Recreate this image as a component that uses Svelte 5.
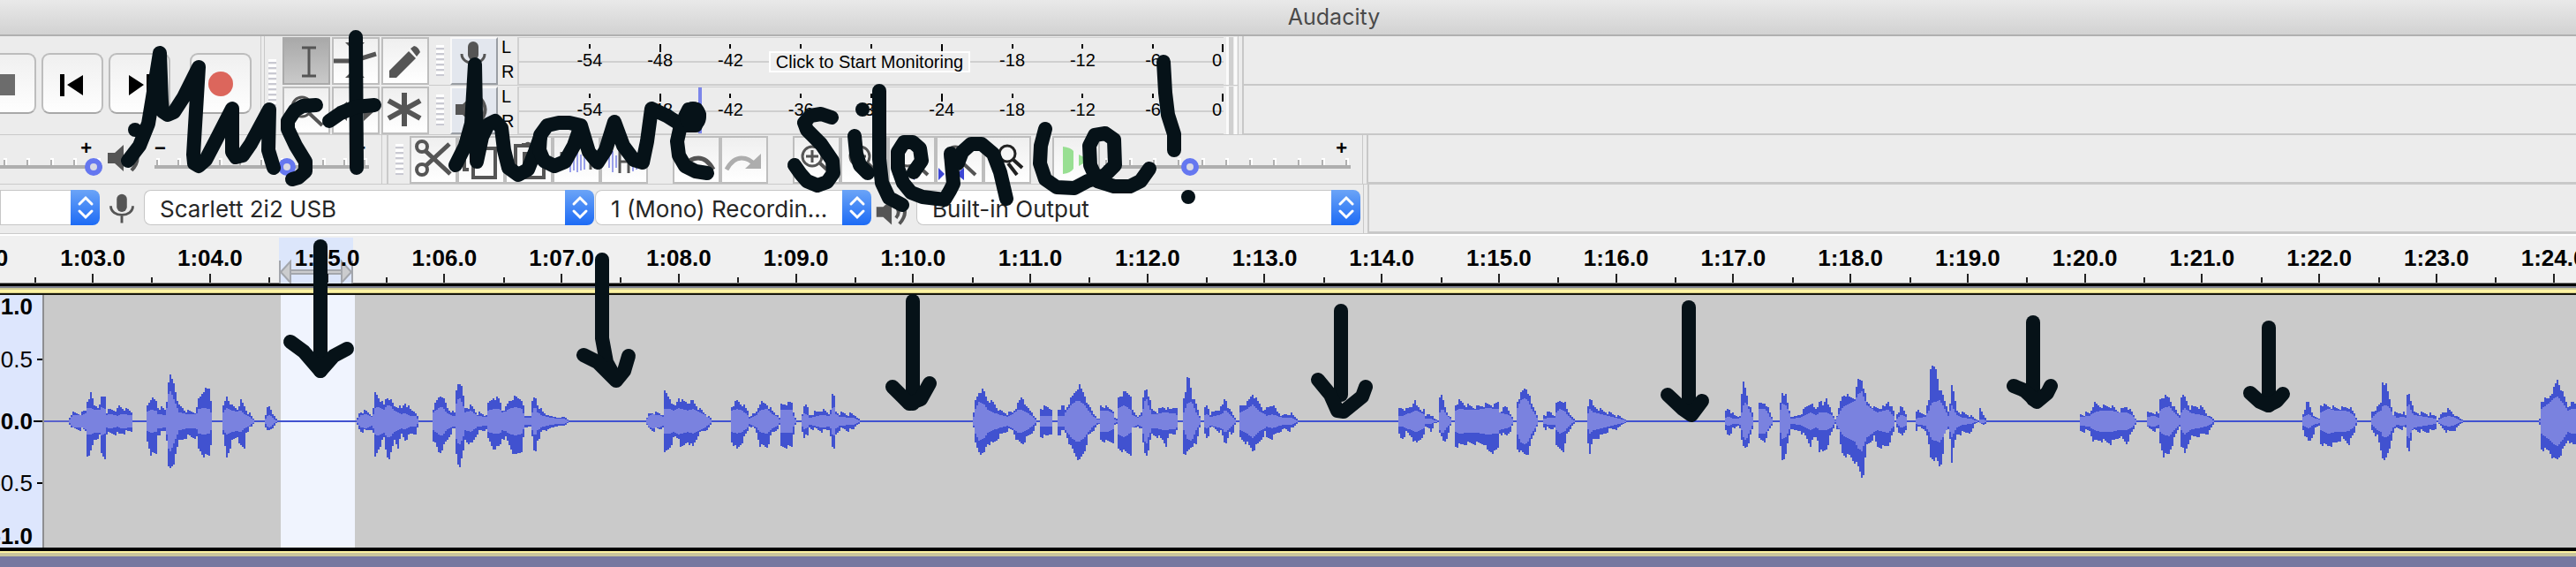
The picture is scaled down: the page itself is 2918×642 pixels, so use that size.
<script lang="ts">
  const meterMarks = [-54, -48, -42, -36, -30, -24, -18, -12, -6];
  const seconds = Array.from({ length: 23 }, (_, i) => 62 + i);

  function clock(t: number) {
    return `${Math.floor(t / 60)}:${String(t % 60).padStart(2, '0')}.0`;
  }

  // [x, peak above, peak below, rms] for each bend of the envelope
  const envelope = [
    [78,3,3,2],[82,8,8,7],[92,8,8,7],[97,12,10,9],[98,22,38,15],[102,30,34,15],[106,17,20,13],[112,16,16,13],[114,26,36,16],[118,28,41,14],[119,10,12,7],[124,12,13,8],[132,12,13,6],[133,17,14,7],[138,14,12,8],[148,10,10,7],[150,0,0,0],
    [164,0,0,0],[165,15,18,10],[170,25,36,13],[176,22,36,12],[178,15,14,8],[186,12,10,7],[188,22,20,15],[189,42,45,30],[192,50,54,34],[196,42,48,25],[199,28,28,18],[202,16,22,10],[212,10,16,8],[220,10,17,8],[221,4,5,3],[223,22,30,14],[230,34,38,15],[237,36,38,14],[239,10,12,6],[240,0,0,0],
    [250,0,0,0],[252,15,16,10],[256,27,40,15],[262,16,22,12],[268,13,16,11],[272,22,28,12],[276,16,30,8],[277,13,12,8],[282,7,7,5],[288,0,0,0],[299,0,0,0],[301,12,12,6],[304,15,10,7],[308,8,6,4],[313,0,0,0],
    [402,0,0,0],[404,3,3,2],[407,10,10,7],[415,10,10,8],[420,7,7,5],[422,12,14,8],[424,31,40,15],[428,26,30,16],[434,17,18,13],[437,27,38,18],[441,24,40,18],[446,16,20,12],[450,16,28,10],[454,13,14,8],[458,20,20,9],[464,12,14,6],[470,10,12,6],[474,0,0,0],
    [489,0,0,0],[490,14,20,10],[497,28,36,16],[500,28,30,16],[506,14,20,9],[511,10,10,6],[514,8,8,6],[516,34,36,20],[519,46,52,28],[523,34,40,20],[526,14,20,10],[533,16,26,12],[540,8,12,6],[550,6,8,5],[552,18,20,12],[558,26,30,14],[565,24,28,14],[568,12,18,10],[572,14,18,11],[576,22,26,14],[582,26,38,16],[590,24,32,14],[594,5,6,4],[601,5,5,4],[602,20,18,10],[605,28,40,18],[608,18,20,10],[614,9,10,6],[622,5,7,4],[632,3,4,3],[638,4,4,3],[644,0,0,0],
    [731,0,0,0],[733,6,6,5],[738,9,9,8],[745,8,8,7],[750,6,6,5],[752,32,36,14],[758,25,28,14],[763,14,17,12],[768,26,18,15],[771,22,30,14],[778,20,22,12],[784,22,28,14],[790,14,14,11],[796,9,10,8],[803,4,5,3],[806,0,0,0],
    [827,0,0,0],[828,16,22,12],[834,22,31,14],[840,18,22,12],[847,10,8,6],[848,4,5,3],[855,8,8,6],[860,20,26,12],[868,18,28,14],[874,10,12,8],[880,6,8,5],[882,3,3,2],[884,18,28,13],[896,20,28,13],[899,5,6,3],[901,0,0,0],[907,0,0,0],[908,8,10,6],[910,18,16,9],[914,14,16,7],[916,6,6,4],[930,12,10,7],[939,8,8,6],[941,20,20,10],[943,35,40,20],[946,10,14,8],[950,8,8,5],[965,7,9,4],[970,3,3,2],[974,0,0,0],
    [1101,0,0,0],[1104,22,24,14],[1108,32,33,22],[1113,34,38,20],[1117,24,24,14],[1124,20,24,10],[1132,10,15,7],[1140,8,9,5],[1146,9,9,8],[1152,18,22,13],[1157,28,25,13],[1162,14,18,10],[1168,10,12,6],[1172,3,4,2],[1173,0,0,0],[1176,0,0,0],[1177,14,16,6],[1184,15,16,6],[1190,14,12,6],[1191,3,3,2],[1192,0,0,0],[1197,0,0,0],[1198,13,14,6],[1204,16,10,6],[1206,12,12,10],[1212,24,28,18],[1218,34,38,23],[1222,39,44,23],[1228,28,32,18],[1232,16,16,12],[1237,10,10,6],[1242,2,3,2],[1245,2,2,2],[1246,17,20,12],[1254,14,22,12],[1261,12,22,8],[1262,3,3,2],[1265,2,2,1],[1266,26,30,15],[1273,32,34,18],[1281,28,36,12],[1282,10,8,7],[1288,4,5,4],[1293,8,10,6],[1294,25,24,14],[1297,39,40,28],[1301,26,26,15],[1304,12,14,8],[1310,10,16,8],[1316,15,20,10],[1320,14,26,10],[1324,12,14,9],[1330,16,12,9],[1333,10,10,6],[1334,0,0,0],
    [1339,0,0,0],[1340,27,34,10],[1343,32,42,18],[1344,48,34,20],[1347,48,30,22],[1349,28,26,22],[1354,18,26,10],[1358,5,6,4],[1360,0,0,0],[1363,0,0,0],[1364,14,14,7],[1367,18,20,8],[1370,6,6,5],[1376,11,8,6],[1383,14,12,8],[1387,27,27,13],[1391,12,12,9],[1395,8,16,5],[1398,3,3,2],[1400,0,0,0],[1403,0,0,0],[1404,16,18,10],[1412,20,24,14],[1418,30,32,19],[1425,20,24,12],[1433,8,10,7],[1434,14,18,6],[1440,18,18,8],[1446,10,12,6],[1452,6,8,4],[1461,8,9,4],[1466,4,4,2],[1470,0,0,0],
    [1583,0,0,0],[1584,13,14,6],[1587,14,20,6],[1592,12,12,8],[1598,16,16,10],[1601,24,22,12],[1604,16,24,12],[1610,12,16,9],[1613,10,16,8],[1614,5,5,3],[1618,8,6,3],[1621,6,10,3],[1624,2,1,1],[1629,0,0,0],[1630,28,10,10],[1633,26,22,14],[1637,11,22,8],[1641,6,6,4],[1644,0,0,0],[1647,0,0,0],[1648,18,27,12],[1652,22,26,14],[1660,17,24,13],[1670,15,24,13],[1680,17,24,14],[1684,18,32,15],[1692,17,34,14],[1697,22,28,14],[1698,10,12,10],[1705,16,16,8],[1711,8,8,6],[1713,0,0,0],
    [1717,0,0,0],[1718,22,30,15],[1722,30,34,24],[1727,38,37,26],[1731,30,34,22],[1734,18,20,14],[1738,12,10,8],[1742,0,0,0],[1747,0,0,0],[1748,6,6,3],[1755,10,8,4],[1761,4,5,4],[1762,18,28,10],[1766,22,30,14],[1771,22,32,12],[1774,12,14,8],[1780,4,4,2],[1784,0,0,0],[1796,0,0,0],[1797,12,18,6],[1800,26,34,14],[1804,16,20,10],[1812,12,16,8],[1822,8,9,6],[1832,6,6,3],[1838,2,2,2],[1841,0,0,0],
    [1953,0,0,0],[1954,10,10,4],[1957,14,16,6],[1962,7,8,3],[1968,4,4,3],[1971,8,6,4],[1972,28,22,10],[1974,43,28,18],[1977,34,30,22],[1980,18,22,14],[1984,8,9,5],[1986,0,0,0],[1991,0,0,0],[1992,18,20,14],[1998,20,22,14],[2000,18,16,12],[2004,8,8,5],[2008,0,0,0],[2014,0,0,0],[2015,14,20,10],[2018,32,42,20],[2022,28,38,18],[2025,14,18,12],[2028,4,8,3],[2038,6,10,4],[2044,14,16,7],[2050,20,26,10],[2055,12,16,7],[2058,16,20,8],[2059,25,32,10],[2064,16,34,10],[2068,26,30,10],[2073,10,14,8],[2078,1,2,1],[2082,12,10,8],[2085,26,34,14],[2089,30,38,18],[2094,26,38,20],[2101,26,46,24],[2103,46,48,30],[2108,46,62,34],[2110,38,58,28],[2114,20,26,18],[2122,14,17,12],[2126,14,28,10],[2134,15,28,12],[2138,22,26,13],[2144,10,12,6],[2146,0,0,0],
    [2148,8,5,3],[2153,16,18,8],[2158,8,8,5],[2160,0,0,0],[2169,0,0,0],[2170,12,8,3],[2174,8,6,4],[2180,8,8,5],[2184,22,26,12],[2186,58,40,18],[2189,66,42,22],[2193,52,42,22],[2196,34,50,24],[2199,36,46,20],[2202,20,10,14],[2206,10,8,6],[2208,20,18,12],[2210,42,44,18],[2213,26,24,12],[2216,11,14,7],[2222,8,12,4],[2232,6,11,3],[2236,2,2,1],[2240,0,0,0],[2242,12,2,2],[2245,7,4,2],[2250,0,0,0],
    [2354,0,0,0],[2356,7,10,5],[2366,8,10,6],[2371,19,22,10],[2378,16,20,12],[2390,16,24,12],[2400,10,16,10],[2408,16,24,10],[2415,8,10,6],[2419,0,0,0],[2431,0,0,0],[2432,8,7,5],[2440,9,9,6],[2445,6,8,4],[2446,24,24,12],[2450,27,38,15],[2456,26,36,17],[2463,12,16,9],[2468,6,5,4],[2470,28,26,10],[2474,26,36,15],[2480,14,18,10],[2486,16,16,8],[2494,14,14,7],[2500,7,12,5],[2508,0,0,0],
    [2606,0,0,0],[2608,8,8,5],[2613,22,22,8],[2617,12,20,6],[2622,4,6,3],[2627,2,3,2],[2628,18,24,10],[2636,16,27,14],[2644,14,24,12],[2652,14,18,12],[2660,15,24,11],[2666,8,12,6],[2669,0,0,0],[2684,0,0,0],[2686,10,9,4],[2692,14,16,10],[2696,20,32,12],[2698,44,40,17],[2702,40,42,18],[2706,24,30,15],[2710,8,10,7],[2714,8,7,4],[2720,9,7,5],[2724,6,6,4],[2725,22,20,12],[2727,35,38,22],[2731,20,12,10],[2733,9,9,7],[2746,8,11,5],[2758,5,8,3],[2760,0,0,0],[2765,8,6,4],[2773,12,12,6],[2780,7,8,4],[2786,2,2,1],[2790,0,0,0],
    [2874,0,0,0],[2877,3,4,2],[2878,22,30,14],[2886,25,32,20],[2892,36,42,26],[2896,46,42,28],[2901,34,34,22],[2908,16,20,12],[2913,20,26,14],[2918,18,24,14]
  ];

  const left = 50;
  const mid = 143;

  // stepped outline, one column every two pixels
  function outline(up: number, down: number, lift: number) {
    let top = '';
    let bottom = '';
    let k = 0;
    for (let x = 78; x < 2918; x += 2) {
      while (k < envelope.length - 2 && envelope[k + 1][0] <= x) k++;
      const a = envelope[k];
      const b = envelope[k + 1];
      const f = (x - a[0]) / (b[0] - a[0]);
      const at = (i: number) => a[i] + (b[i] - a[i]) * f;
      const rough = up === 1 && at(up) > 6 ? ((x * 7) % 5) - 2 : 0;
      const u = Math.round(at(up) + rough + lift);
      const d = Math.round(at(down) - rough + lift);
      top += `H${x - left}V${mid - u}`;
      bottom = `V${mid + d}H${x - left}` + bottom;
    }
    return `M${78 - left} ${mid}${top}H${2918 - left}${bottom}Z`;
  }

  const peaks = outline(1, 2, 1);
  const rms = outline(3, 3, 0);

  const writing = [
    '153,147 153,147',
    '145,182 158,165 168,140 173,110 181,60 183,115 184,126 190,130 197,127 208,110 225,76 219,175 220,185 225,188 233,181 245,158 263,123 263,172 267,178 275,176 284,163 305,124 304,170 310,190',
    '358,119 343,120 334,125 326,137 326,146 335,165 346,183 346,194 338,201 331,203',
    '403,42 404,190',
    '373,137 386,128 403,121 424,119',
    '516,187 527,165 534,140 538,73 540,183 546,155 553,141 561,137 568,145 571,170 576,190 587,198 598,192 606,172 612,155',
    '658,142 645,139 633,139 620,142 612,153 611,170 616,182 628,188 640,183 650,165 658,142 667,172 677,184 686,170 696,138 706,165 718,181 728,184 733,160 738,123 755,131 773,142',
    '773,142 788,142 792,130 789,124 780,124 776,132 785,133 771,142 767,160 769,176 776,188 788,194 801,196',
    '942,133 930,129 918,131 911,139 914,147 930,163 943,182 944,196 937,206 926,210 914,205 907,197 900,187',
    '977,124 977,124',
    '968,154 970,174 974,187 983,196',
    '996,103 996,180 999,207 1007,224 1022,232',
    '1035,195 1044,182 1042,168 1034,161 1024,161 1017,172 1017,190 1023,207 1032,218 1045,223 1070,226 1076,216 1080,208 1077,174 1085,185 1090,172 1100,163 1112,163 1125,174 1133,195 1140,225',
    '1184,146 1179,165 1178,185 1184,203 1197,212 1217,213 1232,205 1252,198 1263,187 1262,158 1252,151 1240,153 1234,165 1235,187 1243,205 1262,211 1280,211 1292,205 1302,191',
    '1318,70 1320,105 1323,130 1330,152 1330,170',
    '1346,223 1346,223'
  ];

  const arrows = [
    '363,279 363,420',
    '329,387 344,398 363,420 378,403 393,395',
    '682,294 682,383 687,410 698,430',
    '661,402 677,410 698,431 707,420 712,403',
    '1034,341 1034,457',
    '1011,438 1030,457 1043,452 1053,434',
    '1519,352 1519,447',
    '1493,430 1507,447 1515,465 1522,466 1543,449 1547,438',
    '1913,348 1913,466',
    '1889,447 1906,463 1916,470 1928,454',
    '2303,365 2303,452',
    '2281,437 2293,442 2307,455 2319,445 2323,437',
    '2570,371 2570,459',
    '2549,445 2560,455 2569,459 2579,454 2586,446'
  ];
</script>

{#snippet chevrons()}
  <svg class="chevrons" viewBox="0 0 33 40" aria-hidden="true"><path d="M10 16l7-7 7 7M10 24l7 7 7-7" /></svg>
{/snippet}

{#snippet mic()}
  <path class="solid" d="M20 11a6 6 0 0 1 12 0v9a6 6 0 0 1-12 0z" />
  <path d="M13 19c0 14 26 14 26 0M26 30v9" stroke-width="3" />
{/snippet}

{#snippet speaker()}
  <path class="solid" d="M6 20h8l10-9v30l-10-9H6z" />
  <path d="M29 19q6 7 0 14M33 12q13 14 0 28" stroke-width="4" />
{/snippet}

{#snippet lens()}
  <circle cx="22" cy="23" r="11" stroke-width="3" />
  <path d="M31 31l14 13" stroke-width="4" />
{/snippet}

{#snippet ticks(count: number)}
  <div class="ticks">
    {#each Array(count) as _}<i></i>{/each}
  </div>
{/snippet}

{#snippet scale(covered: number[])}
  <div class="scale">
    {#each meterMarks as db}
      <span class:long={db % 24 === 0}>{covered.includes(db) ? '' : db}</span>
    {/each}
    <span class="long zero">0</span>
  </div>
{/snippet}

<div class="window">
  <header>Audacity</header>

  <div class="dock">
    <div class="transport">
      <button aria-label="Stop"><svg viewBox="0 0 70 69"><path fill="#6c6c6c" d="M24 24h22v24H24z" /></svg></button>
      <button aria-label="Skip to Start"><svg viewBox="0 0 70 69"><path d="M21 24h5v25h-5zM47 25v23L29 36z" /></svg></button>
      <button aria-label="Skip to End"><svg viewBox="0 0 70 69"><path d="M23 25v23l17-12zM43 24h5v25h-5z" /></svg></button>
      <button class="record" aria-label="Record"><svg viewBox="0 0 70 69"><circle cx="35" cy="35" r="14" fill="#dc665c" /></svg></button>
    </div>

    <div class="grip tall"></div>
    <div class="tools">
      <button class="tool on" aria-label="Selection Tool"><svg viewBox="0 0 54 54"><path d="M22 12h16M30 12v32M22 44h16" stroke-width="3" /></svg></button>
      <button class="tool" aria-label="Envelope Tool"><svg viewBox="0 0 54 54"><path d="M2 27h22l26-8" stroke-width="5" /><path class="solid" d="M15 6h22L26 17zM15 46h22L26 35z" /></svg></button>
      <button class="tool" aria-label="Draw Tool"><svg viewBox="0 0 54 54"><path class="solid" d="M9 46v-8l22-22 8 8-22 22zM33 13l4-3q5 1 7 7l-4 5z" /></svg></button>
      <button class="tool" aria-label="Zoom Tool"><svg viewBox="0 0 54 54">{@render lens()}</svg></button>
      <button class="tool" aria-label="Time Shift Tool"><svg viewBox="0 0 54 54"><path d="M12 28h30" stroke-width="4" /><path class="solid" d="M5 28l12-11v22zM48 28L36 17v22z" /></svg></button>
      <button class="tool" aria-label="Multi-Tool"><svg viewBox="0 0 54 54"><path d="M26 7v38M8 16l36 20M8 36l36-20" stroke-width="6" /></svg></button>
    </div>

    <div class="meters">
      <div class="meter-row">
        <div class="grip"></div>
        <button class="tool meter-button" aria-label="Record Meter"><svg viewBox="0 0 54 54">{@render mic()}</svg></button>
        <div class="channels"><span>L</span><span>R</span></div>
        <div class="meter">
          {@render scale([-36, -30, -24])}
          <button class="hint">Click to Start Monitoring</button>
        </div>
        <div class="clip"></div>
      </div>
      <div class="meter-row">
        <div class="grip"></div>
        <button class="tool meter-button" aria-label="Playback Meter"><svg viewBox="0 0 54 54">{@render speaker()}</svg></button>
        <div class="channels"><span>L</span><span>R</span></div>
        <div class="meter">
          {@render scale([])}
          <div class="peak"></div>
        </div>
        <div class="clip"></div>
      </div>
    </div>
    <div class="spare"><div></div><div></div></div>
  </div>

  <div class="dock bar">
    <div class="mixer">
      <div class="slider recording">
        <div class="signs"><span></span><span>+</span></div>
        {@render ticks(12)}
        <input type="range" min="0" max="100" value="100" aria-label="Recording Volume" />
      </div>
      <svg class="glyph" viewBox="0 0 52 52" aria-hidden="true">{@render speaker()}</svg>
      <div class="slider playback">
        <div class="signs"><span>−</span><span>+</span></div>
        {@render ticks(11)}
        <input type="range" min="0" max="100" value="63" aria-label="Playback Volume" />
      </div>
    </div>
    <div class="grip"></div>
    <div class="group">
      <button class="tool" aria-label="Cut"><svg viewBox="0 0 54 54"><circle cx="14" cy="12" r="6" stroke-width="4" /><circle cx="14" cy="38" r="6" stroke-width="4" /><path d="M18 17l28 26M18 34L45 9" stroke-width="5" /></svg></button>
      <button class="tool" aria-label="Copy"><svg viewBox="0 0 54 54"><path d="M18 14h25v33H18zM13 38H8V6h24v5" stroke-width="4" /></svg></button>
      <button class="tool" aria-label="Paste"><svg viewBox="0 0 54 54"><path d="M22 20h22v27H22zM17 40h-5V11h28v5" stroke-width="4" /><path class="solid" d="M19 13V8h4a4 4 0 0 1 6 0h4v5z" /></svg></button>
      <button class="tool" aria-label="Trim Audio"><svg viewBox="0 0 54 54"><path d="M10 18v20M43 18v20" stroke-width="3" /><path class="blue" d="M16 24v12M20 17v24M24 21v18M28 17v24M32 21v18M36 24v14" /></svg></button>
      <button class="tool" aria-label="Silence Audio"><svg viewBox="0 0 54 54"><path d="M22 16v26M32 16v26M22 29h10" stroke-width="3" /><path class="blue" d="M10 22v14M14 17v24M18 22v14M37 22v18M41 26v12" /></svg></button>
    </div>
    <div class="group">
      <button class="tool" aria-label="Undo"><svg viewBox="0 0 54 54"><path d="M46 38q-7-13-17-13-9 0-15 8" stroke-width="5" /><path class="solid" d="M8 21v16h16z" /></svg></button>
      <button class="tool faded" aria-label="Redo"><svg viewBox="0 0 54 54"><path d="M7 38q7-13 17-13 9 0 15 8" stroke-width="5" /><path class="solid" d="M46 20v17H28z" /></svg></button>
    </div>
    <div class="group zooms">
      <button class="tool" aria-label="Zoom In"><svg viewBox="0 0 54 54">{@render lens()}<path d="M15 23h14M22 16v14" stroke-width="3" /></svg></button>
      <button class="tool" aria-label="Zoom Out"><svg viewBox="0 0 54 54">{@render lens()}<path d="M15 23h14" stroke-width="3" /></svg></button>
      <button class="tool" aria-label="Fit Selection"><svg viewBox="0 0 54 54">{@render lens()}<path class="fit" d="M14 36v14l-9-7zM30 36v14l-9-7z" /></svg></button>
      <button class="tool" aria-label="Fit Project"><svg viewBox="0 0 54 54">{@render lens()}<path class="fit" d="M3 36v14l7-7zM32 36v14l-9-7z" /></svg></button>
      <button class="tool dark" aria-label="Zoom Toggle"><svg viewBox="0 0 54 54"><circle cx="27" cy="20" r="9" stroke-width="3" /><path d="M34 27l10 9M28 31l10 13" stroke-width="4" /></svg></button>
    </div>
    <div class="group play">
      <button class="tool" aria-label="Play-at-Speed"><svg viewBox="0 0 54 54"><path fill="#98df92" stroke="none" d="M12 12q9 1 12 5v20q-3 5-12 6zM30 21l12 6-12 7z" /></svg></button>
    </div>
    <div class="slider speed">
      <div class="signs"><span></span><span>+</span></div>
      {@render ticks(11)}
      <input type="range" min="0" max="100" value="34" aria-label="Playback Speed" />
    </div>
    <div class="spare single"><div></div></div>
  </div>

  <div class="dock bar devices">
    <div class="picker host">
      <select aria-label="Audio Host"><option></option></select>
      {@render chevrons()}
    </div>
    <svg class="glyph" viewBox="0 0 52 52" aria-hidden="true">{@render mic()}</svg>
    <div class="picker input">
      <select aria-label="Recording Device"><option>Scarlett 2i2 USB</option></select>
      {@render chevrons()}
    </div>
    <div class="picker count">
      <select aria-label="Recording Channels"><option>1 (Mono) Recordin...</option></select>
      {@render chevrons()}
    </div>
    <svg class="glyph" viewBox="0 0 52 52" aria-hidden="true">{@render speaker()}</svg>
    <div class="picker output">
      <select aria-label="Playback Device"><option>Built-in Output</option></select>
      {@render chevrons()}
    </div>
    <div class="spare single"><div></div></div>
  </div>

  <div class="timeline">
    <svg class="play-region" viewBox="0 0 84 52" aria-hidden="true">
      <path fill="#dce6fb" d="M0 0h84v52H0z" />
      <path fill="#cbccce" stroke="#a3a6ac" stroke-width="2" d="M1 26v26M83 26v26M13 37h58v4H13zM2 39l11-12v24zM82 39L71 27v24z" />
    </svg>
    <div class="seconds">
      {#each seconds as t}<span>{clock(t)}</span>{/each}
    </div>
  </div>

  <div class="track">
    <div class="levels">
      <b>1.0</b>
      <span>0.5</span>
      <b class="zero-level">0.0</b>
      <span>-0.5</span>
      <b>-1.0</b>
    </div>
    <svg class="wave" aria-label="Audio track" role="img">
      <rect x="268" y="0" width="84" height="286" fill="#f0f4fe" />
      <rect x="0" y="142" width="100%" height="2" fill="#5a62cc" />
      <path d={peaks} fill="#4152d0" />
      <path d={rms} fill="#7a82df" />
    </svg>
  </div>
  <div class="track-edge"></div>

  <svg class="ink" role="img" aria-label="Must have silence!">
    {#each [...writing, ...arrows] as points}
      <polyline {points} />
    {/each}
    <ellipse cx="785" cy="132" rx="7" ry="9" />
  </svg>
</div>

<style>
  :global(body) {
    margin: 0;
    background: #7678a0;
  }
  .window {
    position: relative;
    overflow: hidden;
    padding-bottom: 12px;
    background: linear-gradient(#ececec, #ececec) 0 0 / 100% 630px no-repeat, #7678a0;
    font-family: "Liberation Sans", Arial, sans-serif;
    color: #000;
  }
  .window * {
    box-sizing: border-box;
  }
  header {
    height: 41px;
    padding-left: 104px;
    border-bottom: 2px solid #b0b0b0;
    background: linear-gradient(#e9e9e9, #d2d2d2);
    color: #4a4a4a;
    font: 25px/38px Inter, sans-serif;
    text-align: center;
  }
  button {
    padding: 0;
    border: 0;
    font: inherit;
  }
  button svg {
    display: block;
    width: 100%;
    height: 100%;
  }
  .dock {
    display: flex;
    height: 112px;
    border-bottom: 1px solid #cacaca;
  }
  .bar {
    height: 56px;
  }
  .transport {
    display: flex;
    flex: none;
    gap: 6px;
    width: 300px;
    padding-top: 19px;
    border-right: 1px solid #c8c8c8;
    box-shadow: inset -3px 0 #ececec, inset -4px 0 #c8c8c8;
  }
  .transport button {
    flex: none;
    width: 70px;
    height: 69px;
    border: 2px solid #bdbdbd;
    border-bottom-color: #a8a8a8;
    border-radius: 9px;
    background: linear-gradient(#f0f0f0, #fefefe);
  }
  .transport button svg {
    margin: -2px;
    width: 70px;
    height: 69px;
  }
  .transport button:first-child {
    margin-left: -29px;
  }
  .transport .record {
    margin-left: 16px;
  }
  .grip {
    flex: none;
    align-self: center;
    width: 9px;
    height: 36px;
    margin: 0 7px 0 8px;
    background: repeating-linear-gradient(#fff 0 3px, #c9c9d2 3px 5px, #ececec 5px 6px);
  }
  .grip.tall {
    height: 60px;
    margin: 0 7px 0 4px;
  }
  .tools {
    display: grid;
    flex: none;
    grid-template-columns: repeat(3, 54px);
    gap: 2px;
    padding-top: 1px;
    align-content: start;
  }
  .tool {
    flex: none;
    width: 54px;
    height: 54px;
    border: 2px solid #bebebe;
    background: linear-gradient(#efefef, #fff);
    fill: none;
    stroke: #555;
  }
  .tool svg {
    width: 54px;
    height: 54px;
    margin: -2px;
  }
  .tool.on {
    border-color: #aaa;
    background: linear-gradient(#a9a9a9, #c9c9c9);
  }
  .tool.dark {
    stroke: #222;
  }
  .tool.faded {
    stroke: #adadad;
  }
  .solid {
    fill: #555;
    stroke: none;
  }
  .faded .solid {
    fill: #adadad;
  }
  .blue {
    stroke: #9aa0ea;
    stroke-width: 2;
  }
  .fit {
    fill: #3c45d4;
    stroke: none;
  }
  .meters {
    flex: none;
    width: 916px;
  }
  .meter-row {
    display: flex;
    height: 56px;
    padding-top: 1px;
    border-bottom: 1px solid #cacaca;
  }
  .tool.meter-button {
    border-color: #f8f8f8 #9a9ea4 #9a9ea4 #f8f8f8;
    background: #e3e7ee;
  }
  .channels {
    display: grid;
    flex: none;
    width: 22px;
    grid-template-rows: 28px 27px;
    padding-left: 4px;
    font-size: 20px;
    line-height: 22px;
  }
  .meter {
    position: relative;
    flex: none;
    width: 800px;
    border: 2px solid #d0d0d0;
    border-width: 1px 0 1px 2px;
    background: linear-gradient(#cfcfcf, #cfcfcf) 0 26px / 100% 2px no-repeat;
  }
  .scale {
    display: grid;
    height: 100%;
    grid-template-columns: repeat(9, 1fr) 40px;
    padding-left: 40px;
    font-size: 20px;
    line-height: 20px;
    text-align: center;
  }
  .scale span {
    padding-top: 7px;
  }
  .scale span::before {
    content: '';
    display: block;
    width: 2px;
    height: 5px;
    margin: 0 auto 3px;
    background: #000;
  }
  .scale .long::before {
    height: 9px;
    margin-bottom: -1px;
  }
  .scale .zero {
    padding-right: 2px;
    text-align: right;
  }
  .scale .zero::before {
    margin-right: -2px;
  }
  .hint {
    position: absolute;
    top: 15px;
    left: 283px;
    width: 228px;
    height: 24px;
    border: 2px solid #fff;
    background: #eee;
    font-size: 20px;
    line-height: 20px;
    white-space: nowrap;
  }
  .peak {
    position: absolute;
    top: 0;
    left: 203px;
    width: 4px;
    height: 52px;
    background: #7c86ea;
  }
  .clip {
    width: 12px;
    margin-left: 3px;
    border: solid #fafafa;
    border-width: 0 3px;
    background: linear-gradient(90deg, #d0d0d0 5px, #ececec 5px);
  }
  .spare {
    flex: 1;
    padding-left: 4px;
    border: solid #c8c8c8;
    border-width: 0 0 0 1px;
  }
  .spare div {
    height: 56px;
    border: solid #c8c8c8;
    border-width: 0 0 2px 2px;
  }
  .single div {
    height: 55px;
  }
  .mixer {
    display: flex;
    flex: none;
    width: 440px;
    border-right: 2px solid #cacaca;
    box-shadow: inset -5px 0 #ececec, inset -6px 0 #cacaca;
  }
  .glyph {
    flex: none;
    width: 52px;
    height: 52px;
    fill: none;
    stroke: #555;
  }
  .group {
    display: flex;
    flex: none;
    padding-top: 1px;
    margin-right: 28px;
  }
  .zooms {
    margin-right: 24px;
  }
  .play {
    margin-right: 4px;
  }
  .slider {
    display: grid;
    flex: none;
    grid-template-rows: 26px 20px;
    grid-template-columns: 100%;
  }
  .recording {
    width: 300px;
    margin-left: -184px;
  }
  .playback {
    width: 243px;
    margin-left: 7px;
  }
  .speed {
    width: 280px;
    margin-right: 13px;
  }
  .signs {
    display: flex;
    justify-content: space-between;
    padding-right: 4px;
    font-size: 22px;
    font-weight: bold;
    line-height: 30px;
  }
  .recording .signs {
    padding-right: 12px;
  }
  .ticks {
    display: flex;
    grid-area: 2 / 1;
    justify-content: space-between;
    height: 8px;
    padding: 0 2px;
  }
  .ticks i {
    width: 4px;
    height: 8px;
    border: solid #fff;
    border-width: 2px 2px 0 0;
    background: #b0b0b0;
  }
  input {
    grid-area: 2 / 1;
    width: 100%;
    height: 20px;
    margin: 0;
    appearance: none;
    background: linear-gradient(#aeaeae, #aeaeae) 0 8px / 100% 4px no-repeat;
  }
  input::-webkit-slider-thumb {
    width: 20px;
    height: 20px;
    border: 6px solid #6577f0;
    border-radius: 50%;
    appearance: none;
    background: #d9d9e4;
  }
  .devices {
    padding-top: 6px;
  }
  .devices .glyph {
    width: 50px;
    height: 50px;
  }
  .devices .spare {
    margin-top: -6px;
  }
  .picker {
    display: grid;
    flex: none;
    height: 40px;
    grid-template-columns: 1fr 33px;
  }
  select {
    min-width: 0;
    height: 40px;
    padding: 2px 0 0 17px;
    border: 1px solid #c6c6c6;
    border-right: 0;
    border-radius: 8px 0 0 8px;
    appearance: none;
    background: #fff;
    color: #262626;
    font: 26px Inter, sans-serif;
  }
  .chevrons {
    width: 33px;
    height: 40px;
    border-radius: 0 8px 8px 0;
    background: linear-gradient(#6ba4f7, #1d6bf5);
    fill: none;
    stroke: #fff;
    stroke-linecap: round;
    stroke-width: 3;
  }
  .host {
    width: 113px;
  }
  .host select {
    border-radius: 0;
  }
  .input {
    width: 510px;
    margin-right: 1px;
  }
  .count {
    width: 313px;
  }
  .output {
    width: 503px;
    margin: 0 3px 0 1px;
  }
  .timeline {
    position: relative;
    height: 69px;
    overflow: hidden;
    border-top: 2px solid #fff;
    border-bottom: 2px solid #16160c;
    background:
      linear-gradient(#888 0 1px, #000 1px 4px, #7d8190 4px 6px, #d0cc98 6px 8px, #fdf3a2 8px 11px, #d8cf85 11px 12px) 0 100% / 100% 12px no-repeat,
      #f0f0f0;
  }
  .play-region {
    position: absolute;
    top: 2px;
    left: 316px;
    width: 84px;
    height: 52px;
  }
  .seconds {
    position: relative;
    display: grid;
    grid-template-columns: repeat(23, 1fr);
    height: 53px;
    margin: 0 -41px 0 -94px;
    font-size: 26px;
    font-weight: bold;
    line-height: 50px;
    text-align: center;
  }
  .seconds span {
    height: 53px;
    overflow: hidden;
    background: linear-gradient(#222, #222) 0 100% / 2px 6px no-repeat;
  }
  .seconds span::after {
    content: '';
    display: block;
    width: 2px;
    height: 10px;
    margin: -7px auto 0;
    background: #222;
  }
  .track {
    display: flex;
    height: 286px;
  }
  .track-edge {
    height: 10px;
    background: linear-gradient(#000 0 4px, #fdf3a2 4px 6px, #c9c59c 6px);
  }
  .levels {
    display: grid;
    flex: none;
    width: 50px;
    grid-template-rows: 38px 70px 70px 70px 38px;
    grid-template-columns: minmax(0, 1fr);
    align-items: center;
    justify-items: end;
    padding-right: 11px;
    border-right: 2px solid #8e8e90;
    background: #dde6fd;
    font-size: 26px;
    line-height: 26px;
  }
  .levels > * {
    position: relative;
    white-space: nowrap;
  }
  .levels :first-child {
    align-self: start;
  }
  .levels :last-child {
    align-self: end;
  }
  .levels span::after,
  .zero-level::after {
    content: '';
    position: absolute;
    top: 12px;
    right: -11px;
    width: 6px;
    height: 2px;
    background: #000;
  }
  .levels .zero-level::after {
    width: 10px;
  }
  .wave {
    flex: 1;
    height: 286px;
    min-width: 0;
    background: #cacaca;
    shape-rendering: crispEdges;
  }
  .ink {
    position: absolute;
    inset: 0;
    width: 100%;
    height: 100%;
    pointer-events: none;
    fill: none;
    stroke: #061218;
    stroke-linecap: round;
    stroke-linejoin: round;
    stroke-width: 16;
  }
</style>
